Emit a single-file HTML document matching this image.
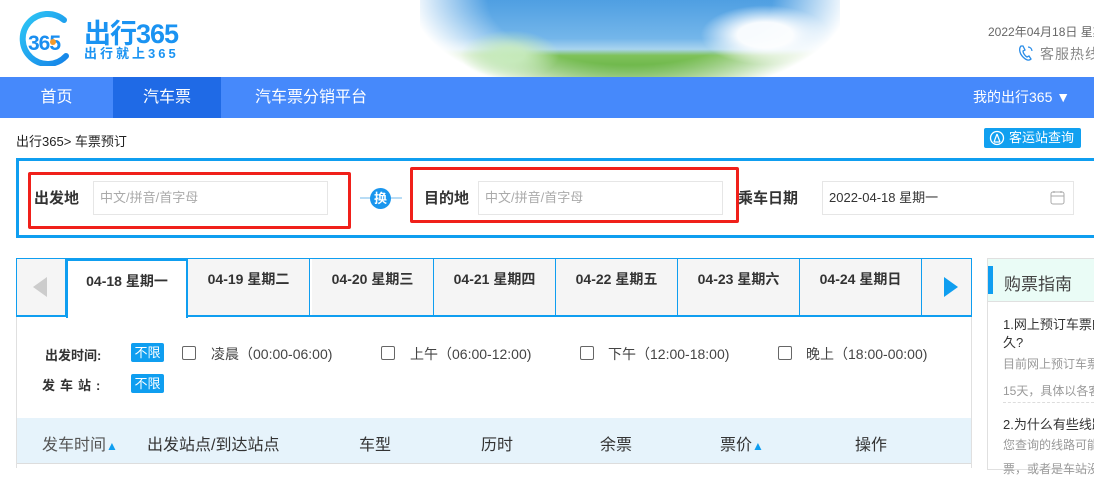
<!DOCTYPE html>
<html><head><meta charset="utf-8">
<style>
*{margin:0;padding:0;box-sizing:border-box}
body{width:1094px;height:468px;overflow:hidden;background:#fff;font-family:"Liberation Sans","Noto Sans CJK SC",sans-serif;color:#333;position:relative}
.a{position:absolute;white-space:nowrap}
.nav{position:absolute;left:0;top:77px;width:1094px;height:41px;background:#4689fb}
.nav span{position:absolute;top:0;height:41px;line-height:41px;color:#fff;font-size:16px;text-align:center}
.tab{position:absolute;top:259px;height:57px;width:122px;background:#f5f5f5;border-right:1px solid #0f9ef0;font-weight:bold;font-size:14px;text-align:center;line-height:40px;color:#333}
.cb{position:absolute;width:14px;height:14px;border:1px solid #666;border-radius:2px;background:#fff}
.tag{position:absolute;width:33px;height:19px;background:#0f9ef0;color:#fff;font-size:13px;line-height:19px;text-align:center;border-radius:2px}
.ft{font-size:14px;color:#444}
.th{font-size:16px;color:#333;top:431px}
.g{font-size:12px;color:#999}
</style></head><body>
<!-- logo -->
<svg class="a" style="left:14px;top:10px" width="66" height="56" viewBox="0 0 66 56">
<defs><linearGradient id="lg" x1="0" y1="0" x2="1" y2="1"><stop offset="0" stop-color="#2ec7f5"/><stop offset="1" stop-color="#1583e8"/></linearGradient></defs>
<path d="M50 10 A25 25 0 1 0 52 46" fill="none" stroke="url(#lg)" stroke-width="6" stroke-linecap="round"/>
<text x="14" y="40" font-size="21" font-weight="bold" fill="#1a8ef0" font-family="Liberation Sans" letter-spacing="-1">365</text>
<circle cx="39" cy="32" r="3" fill="#f39a2c"/>
</svg>
<div class="a" style="left:84px;top:12px;font-size:27px;font-weight:bold;color:#1a93f2;letter-spacing:-1px">出行365</div>
<div class="a" style="left:84px;top:43px;font-size:13px;font-weight:bold;color:#1a93f2;letter-spacing:3px">出行就上365</div>
<!-- banner -->
<div class="a" style="left:420px;top:0;width:420px;height:77px;background:linear-gradient(180deg,#4f9fe2 0%,#74b6ea 50%,#a9d4ee 64%,#7fc25a 72%,#5eae3c 100%);-webkit-mask-image:radial-gradient(ellipse 52% 130% at 50% 0%,#000 65%,transparent 100%);mask-image:radial-gradient(ellipse 52% 130% at 50% 0%,#000 65%,transparent 100%)"></div>
<div class="a" style="left:700px;top:5px;width:130px;height:60px;background:radial-gradient(ellipse at center,rgba(255,255,255,.95) 30%,rgba(255,255,255,0) 70%)"></div>
<div class="a" style="left:460px;top:30px;width:100px;height:50px;background:radial-gradient(ellipse at center,rgba(200,235,190,.9) 20%,rgba(255,255,255,0) 70%)"></div>
<div class="a" style="left:988px;top:23px;font-size:12px;color:#666">2022年04月18日 星期一</div>
<svg class="a" style="left:1018px;top:44px" width="16" height="18" viewBox="0 0 16 18"><path d="M3 2 C1 4 1 9 5 13 C8 16 11 17 13 15 L11 12 L9 13 C7 12 5 9 5 7 L7 6 L5 2 Z" fill="none" stroke="#2a8de8" stroke-width="1.3"/><path d="M10 3 a4 4 0 0 1 4 4" fill="none" stroke="#2a8de8" stroke-width="1.2"/></svg>
<div class="a" style="left:1040px;top:44px;font-size:14px;color:#888;letter-spacing:1px">客服热线</div>
<!-- nav -->
<div class="nav">
<span style="left:0;width:113px">首页</span>
<span style="left:113px;width:108px;background:#1f6ae6">汽车票</span>
<span style="left:221px;width:180px">汽车票分销平台</span>
<span style="left:973px;width:110px;text-align:left;font-size:14px">我的出行365 ▼</span>
</div>
<div class="a" style="left:16px;top:131px;font-size:13px;color:#222">出行365&gt; 车票预订</div>
<div class="a" style="left:984px;top:128px;width:97px;height:20px;background:#11a0f0;border-radius:2px;color:#fff;font-size:13px;line-height:20px;padding-left:25px">客运站查询</div>
<svg class="a" style="left:989px;top:130px" width="16" height="16" viewBox="0 0 16 16"><circle cx="8" cy="8" r="6.5" fill="none" stroke="#fff" stroke-width="1.3"/><path d="M8 4 L5 12 M8 4 L11 12 M5 12 L11 12" stroke="#fff" stroke-width="1.2" fill="none"/></svg>
<!-- search box -->
<div class="a" style="left:16px;top:158px;width:1090px;height:80px;border:3px solid #0f9ef0"></div>
<div class="a" style="left:28px;top:172px;width:323px;height:57px;border:3px solid #f0201a;border-radius:2px"></div>
<div class="a" style="left:410px;top:167px;width:329px;height:56px;border:3px solid #f0201a;border-radius:2px"></div>
<div class="a" style="left:34px;top:187px;font-size:15px;font-weight:bold;color:#333">出发地</div>
<div class="a" style="left:93px;top:181px;width:235px;height:34px;border:1px solid #e6e6e6;font-size:13px;color:#aaa;line-height:32px;padding-left:6px">中文/拼音/首字母</div>
<div class="a" style="left:360px;top:197px;width:42px;height:2px;background:#b8dcf5"></div>
<div class="a" style="left:370px;top:188px;width:21px;height:21px;border-radius:50%;background:#1a96ee;color:#fff;font-size:13px;font-weight:bold;line-height:21px;text-align:center">换</div>
<div class="a" style="left:424px;top:187px;font-size:15px;font-weight:bold;color:#333">目的地</div>
<div class="a" style="left:478px;top:181px;width:245px;height:34px;border:1px solid #e6e6e6;font-size:13px;color:#aaa;line-height:32px;padding-left:6px">中文/拼音/首字母</div>
<div class="a" style="left:738px;top:187px;font-size:15px;font-weight:bold;color:#333">乘车日期</div>
<div class="a" style="left:822px;top:181px;width:252px;height:34px;border:1px solid #e6e6e6;font-size:13px;color:#333;line-height:32px;padding-left:6px">2022-04-18 星期一</div>
<svg class="a" style="left:1050px;top:190px" width="15" height="15" viewBox="0 0 15 15"><rect x="1" y="2" width="13" height="12" rx="2" fill="none" stroke="#aaa"/><path d="M1 6 H14 M4 1 V3 M11 1 V3" stroke="#aaa"/></svg>
<!-- tabs -->
<div class="a" style="left:16px;top:258px;width:956px;height:210px;border-left:1px solid #e0e0e0;border-right:1px solid #e0e0e0"></div>
<div class="a" style="left:16px;top:258px;width:956px;height:1px;background:#0f9ef0"></div>
<div class="tab" style="left:16px;width:50px;background:#f5f5f5;border-left:1px solid #0f9ef0"></div>
<div class="a" style="left:33px;top:277px;width:0;height:0;border-top:10px solid transparent;border-bottom:10px solid transparent;border-right:14px solid #ccc"></div>
<div class="tab" style="left:66px;background:#fff;border:2px solid #0f9ef0;border-bottom:none;top:259px;height:59px;z-index:2">04-18 星期一</div>
<div class="tab" style="left:188px">04-19 星期二</div>
<div class="tab" style="left:312px">04-20 星期三</div>
<div class="tab" style="left:434px">04-21 星期四</div>
<div class="tab" style="left:556px">04-22 星期五</div>
<div class="tab" style="left:678px">04-23 星期六</div>
<div class="tab" style="left:800px">04-24 星期日</div>
<div class="tab" style="left:922px;width:50px"></div>
<div class="a" style="left:944px;top:277px;width:0;height:0;border-top:10px solid transparent;border-bottom:10px solid transparent;border-left:14px solid #0f9ef0"></div>
<div class="a" style="left:16px;top:315px;width:956px;height:2px;background:#0f9ef0"></div>
<div class="a" style="left:68px;top:315px;width:112px;height:3px;background:#fff;z-index:3"></div>
<!-- filters -->
<div class="a" style="left:45px;top:345px;font-size:13px;font-weight:bold;color:#333">出发时间:</div>
<div class="a" style="left:42px;top:375px;font-size:13px;font-weight:bold;color:#333;letter-spacing:5px">发车站:</div>
<div class="tag" style="left:131px;top:343px">不限</div>
<div class="tag" style="left:131px;top:374px">不限</div>
<div class="cb" style="left:182px;top:346px"></div><div class="a ft" style="left:211px;top:344px">凌晨（00:00-06:00)</div>
<div class="cb" style="left:381px;top:346px"></div><div class="a ft" style="left:410px;top:344px">上午（06:00-12:00)</div>
<div class="cb" style="left:580px;top:346px"></div><div class="a ft" style="left:608px;top:344px">下午（12:00-18:00)</div>
<div class="cb" style="left:778px;top:346px"></div><div class="a ft" style="left:806px;top:344px">晚上（18:00-00:00)</div>
<!-- table header -->
<div class="a" style="left:17px;top:418px;width:954px;height:46px;background:#e6f3fb;border-bottom:1px solid #ddd"></div>
<div class="a th" style="left:42px;color:#555">发车时间<span style="color:#0f9ef0;font-size:12px">▲</span></div>
<div class="a th" style="left:147px">出发站点/到达站点</div>
<div class="a th" style="left:359px">车型</div>
<div class="a th" style="left:481px">历时</div>
<div class="a th" style="left:600px">余票</div>
<div class="a th" style="left:720px">票价<span style="color:#0f9ef0;font-size:12px">▲</span></div>
<div class="a th" style="left:855px">操作</div>
<!-- sidebar -->
<div class="a" style="left:987px;top:258px;width:110px;height:212px;border:1px solid #e0e0e0"></div>
<div class="a" style="left:988px;top:259px;width:110px;height:43px;background:#eafcf6;border-bottom:1px solid #e0e0e0"></div>
<div class="a" style="left:988px;top:266px;width:5px;height:28px;background:#0f9ef0"></div>
<div class="a" style="left:1004px;top:270px;font-size:17px;color:#444">购票指南</div>
<div class="a" style="left:1003px;top:316px;font-size:13px;color:#333;line-height:18px">1.网上预订车票的<br>久?</div>
<div class="a g" style="left:1003px;top:355px">目前网上预订车票</div>
<div class="a g" style="left:1003px;top:382px">15天，具体以各客</div>
<div class="a" style="left:1003px;top:402px;width:91px;border-top:1px dashed #ddd"></div>
<div class="a" style="left:1003px;top:414px;font-size:13px;color:#333">2.为什么有些线路</div>
<div class="a g" style="left:1003px;top:436px">您查询的线路可能</div>
<div class="a g" style="left:1003px;top:460px">票，或者是车站没</div>
</body></html>
